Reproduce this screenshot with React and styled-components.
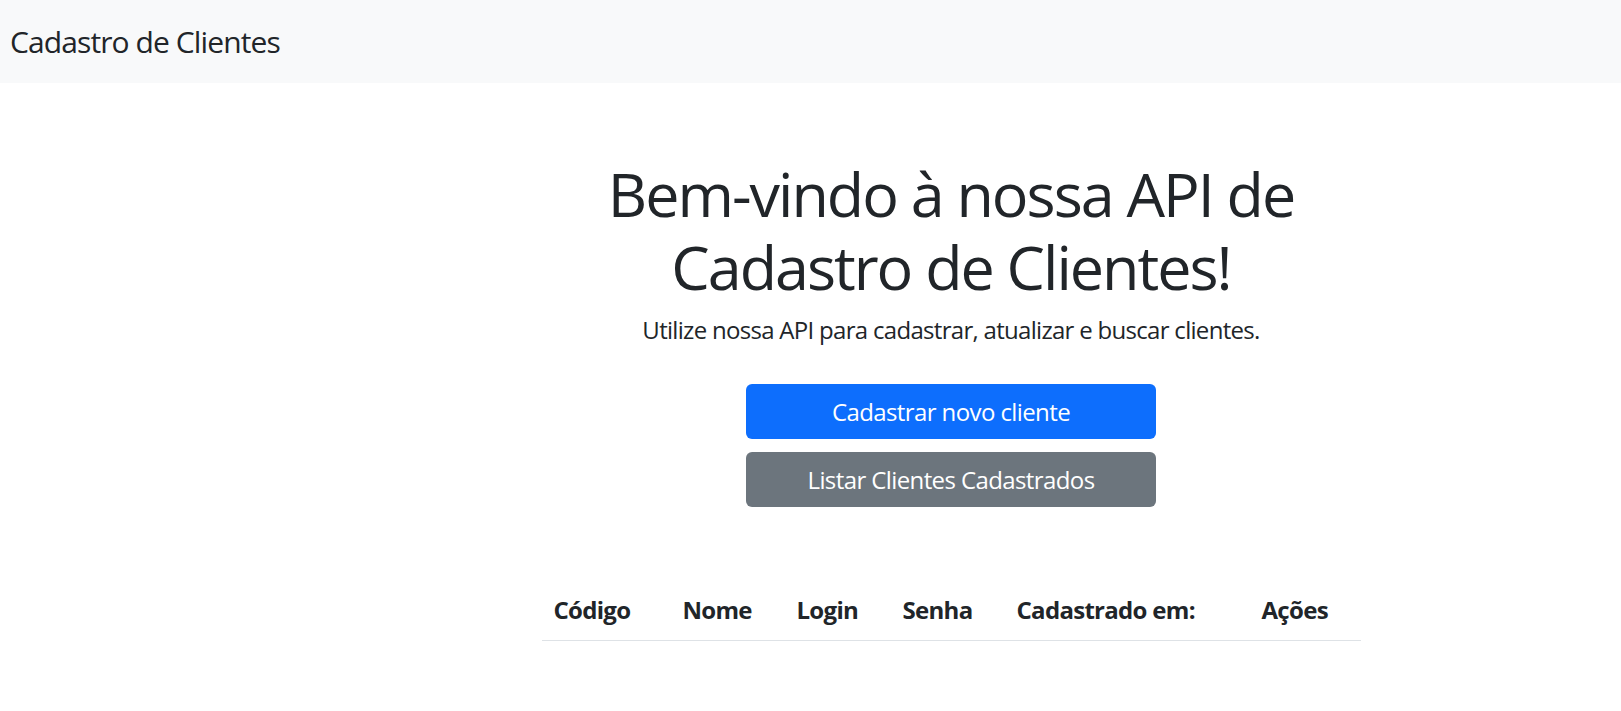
import React from "react";
import styled, { createGlobalStyle } from "styled-components";

const GlobalStyle = createGlobalStyle`
  * {
    box-sizing: border-box;
  }

  body {
    margin: 0;
    background: #fff;
    color: #212529;
    font-family: "Open Sans", "Noto Sans", sans-serif;
  }
`;

const columns = [
  { label: "Código", width: 129 },
  { label: "Nome", width: 114 },
  { label: "Login", width: 106 },
  { label: "Senha", width: 114 },
  { label: "Cadastrado em:", width: 245 },
  { label: "Ações", width: 111 },
];

const App = () => {
  return (
    <>
      <GlobalStyle />
      <Navbar>
        <Brand href="#">Cadastro de Clientes</Brand>
      </Navbar>
      <Main>
        <Content>
          <Title>Bem-vindo à nossa API de Cadastro de Clientes!</Title>
          <Lead>Utilize nossa API para cadastrar, atualizar e buscar clientes.</Lead>
          <Actions>
            <Button variant="primary">Cadastrar novo cliente</Button>
            <Button variant="secondary">Listar Clientes Cadastrados</Button>
          </Actions>
          <Table>
            <thead>
              <tr>
                {columns.map((col) => (
                  <Th key={col.label} style={{ width: col.width }}>
                    {col.label}
                  </Th>
                ))}
              </tr>
            </thead>
            <tbody></tbody>
          </Table>
        </Content>
      </Main>
    </>
  );
};

export default App;

const Navbar = styled.nav`
  height: 83px;
  background: #f8f9fa;
  display: flex;
  align-items: center;
  padding: 0 10px;
`;

const Brand = styled.a`
  font-size: 30px;
  line-height: 45px;
  color: #212529;
  text-decoration: none;
  letter-spacing: -0.9px;
`;

const Main = styled.main`
  display: flex;
  justify-content: center;
  padding: 74px 0 0 281px;
`;

const Content = styled.div`
  width: 819px;
  display: flex;
  flex-direction: column;
  align-items: center;
`;

const Title = styled.h1`
  margin: 0 0 9px;
  width: 760px;
  font-size: 61px;
  font-weight: 400;
  line-height: 73px;
  text-align: center;
  letter-spacing: -2px;
`;

const Lead = styled.p`
  margin: 0 0 36px;
  font-size: 24px;
  line-height: 36px;
  letter-spacing: -0.7px;
`;

const Actions = styled.div`
  display: flex;
  flex-direction: column;
  gap: 13px;
  width: 410px;
  margin-bottom: 73px;
`;

const Button = styled.button`
  height: 55px;
  border: none;
  border-radius: 6px;
  font-family: inherit;
  font-size: 24px;
  letter-spacing: -0.6px;
  color: #fff;
  background: ${({ variant }) => (variant === "primary" ? "#0d6efd" : "#6c757d")};
  cursor: pointer;
`;

const Table = styled.table`
  width: 100%;
  border-collapse: collapse;
  table-layout: fixed;
`;

const Th = styled.th`
  padding: 12px;
  font-size: 24px;
  line-height: 36px;
  font-weight: 700;
  text-align: left;
  letter-spacing: -0.7px;
  border-bottom: 1px solid #dee2e6;
  white-space: nowrap;
`;
